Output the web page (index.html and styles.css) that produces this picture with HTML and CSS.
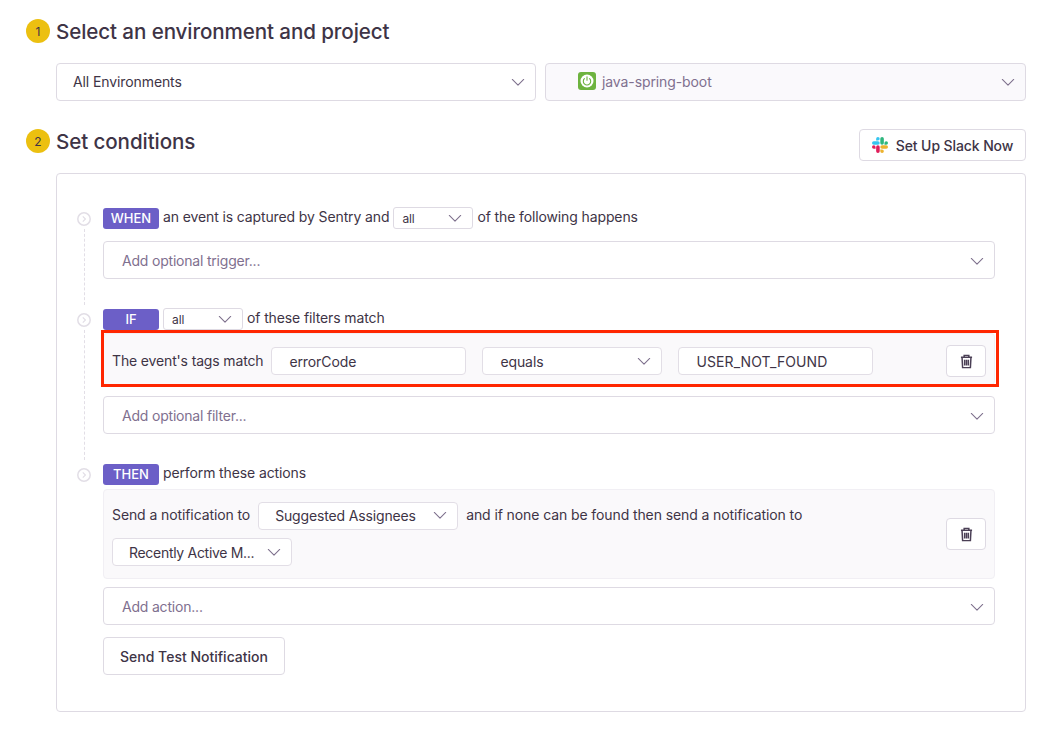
FILE: index.html
```html
<!DOCTYPE html>
<html>
<head>
    <title>Alert Rule</title>
    <link rel="stylesheet" href="styles.css">
</head>
<body>
    <svg class="defs" width="0" height="0">
        <symbol id="chevron" viewBox="0 0 16 10"><path d="M1.5 1.5 8 8l6.5-6.5" fill="none" stroke="currentColor" stroke-width="1.2" stroke-linecap="round" stroke-linejoin="round"/></symbol>
        <symbol id="step" viewBox="0 0 14 14"><circle cx="7" cy="7" r="6.2" fill="none" stroke="currentColor" stroke-width="1.5"/><path d="M5.8 4.4 8.4 7l-2.6 2.6" fill="none" stroke="currentColor" stroke-width="1.2"/></symbol>
        <symbol id="trash" viewBox="0 0 14 16"><path d="M1 3.5h12M4.5 3.2V1.4h5v1.8M2.2 3.6l.6 11h8.4l.6-11M5 6v6.4M7 6v6.4M9 6v6.4" fill="none" stroke="currentColor" stroke-width="1.6"/></symbol>
    </svg>

    <div class="step-header">
        <span class="step-num">1</span>
        <h2>Select an environment and project</h2>
    </div>
    <div class="env-row">
        <div class="select">
            <span>All Environments</span>
            <svg class="chev"><use href="#chevron"/></svg>
        </div>
        <div class="select select-disabled">
            <span class="project">
                <svg class="spring" viewBox="0 0 18 18">
                    <rect width="18" height="18" rx="3" fill="#6db33f"/>
                    <circle cx="9" cy="9" r="6.5" fill="#fff"/>
                    <path d="M9 4.8v3.4M6.4 6.6a3.7 3.7 0 1 0 5.2 0" fill="none" stroke="#6db33f" stroke-width="1.1" stroke-linecap="round"/>
                </svg>
                java-spring-boot
            </span>
            <svg class="chev"><use href="#chevron"/></svg>
        </div>
    </div>

    <div class="step-header step-two">
        <span class="step-num">2</span>
        <h2>Set conditions</h2>
        <a class="btn btn-slack">
            <svg class="slack" viewBox="0 0 54 54">
                <path fill="#36c5f0" d="M20 14a6 6 0 0 1 0 12H6a6 6 0 0 1 0-12zM14 6a6 6 0 1 1 6 6h-6z"/>
                <path fill="#2eb67d" d="M28 6a6 6 0 0 1 12 0v14a6 6 0 0 1-12 0zM42 20a6 6 0 1 1 6 6h-6z"/>
                <path fill="#ecb22e" d="M34 28h14a6 6 0 0 1 0 12H34a6 6 0 0 1 0-12zM28 42h6a6 6 0 1 1-6 6z"/>
                <path fill="#e01e5a" d="M14 34a6 6 0 0 1 12 0v14a6 6 0 0 1-12 0zM0 34a6 6 0 0 1 6-6 6 6 0 0 1 6 6v6H6a6 6 0 0 1-6-6z"/>
            </svg>
            Set Up Slack Now
        </a>
    </div>

    <div class="panel">
        <div class="block block-when">
            <div class="gutter"><svg class="step-icon"><use href="#step"/></svg><i class="dash"></i></div>
            <div class="block-body">
                <div class="cond-head">
                    <span class="tag">WHEN</span>
                    <span class="cond-text">an event is captured by Sentry and</span>
                    <div class="select select-mini"><span>all</span><svg class="chev"><use href="#chevron"/></svg></div>
                    <span class="cond-text">of the following happens</span>
                </div>
                <div class="select select-add">
                    <span class="placeholder">Add optional trigger...</span>
                    <svg class="chev"><use href="#chevron"/></svg>
                </div>
            </div>
        </div>

        <div class="block block-if">
            <div class="gutter"><svg class="step-icon"><use href="#step"/></svg><i class="dash"></i></div>
            <div class="block-body">
                <div class="cond-head cond-head-flush">
                    <span class="tag">IF</span>
                    <div class="select select-mini"><span>all</span><svg class="chev"><use href="#chevron"/></svg></div>
                    <span class="cond-text">of these filters match</span>
                </div>
                <div class="rule rule-filter">
                    <div class="rule-fields">
                        <span class="rule-label">The event's tags match</span>
                        <div class="field field-key">errorCode</div>
                        <div class="select select-small select-match"><span>equals</span><svg class="chev"><use href="#chevron"/></svg></div>
                        <div class="field field-value">USER_NOT_FOUND</div>
                    </div>
                    <a class="btn btn-trash"><svg class="trash"><use href="#trash"/></svg></a>
                    <div class="highlight"></div>
                </div>
                <div class="select select-add">
                    <span class="placeholder">Add optional filter...</span>
                    <svg class="chev"><use href="#chevron"/></svg>
                </div>
            </div>
        </div>

        <div class="block block-then">
            <div class="gutter"><svg class="step-icon"><use href="#step"/></svg></div>
            <div class="block-body">
                <div class="cond-head">
                    <span class="tag">THEN</span>
                    <span class="cond-text">perform these actions</span>
                </div>
                <div class="rule rule-action">
                    <div class="rule-fields rule-wrap">
                        <span class="cond-text">Send a notification to</span>
                        <div class="select select-small select-assignee"><span>Suggested Assignees</span><svg class="chev"><use href="#chevron"/></svg></div>
                        <span class="cond-text">and if none can be found then send a notification to</span>
                        <div class="select select-small select-fallback"><span>Recently Active M...</span><svg class="chev"><use href="#chevron"/></svg></div>
                    </div>
                    <a class="btn btn-trash"><svg class="trash"><use href="#trash"/></svg></a>
                </div>
                <div class="select select-add">
                    <span class="placeholder">Add action...</span>
                    <svg class="chev"><use href="#chevron"/></svg>
                </div>
                <a class="btn btn-test">Send Test Notification</a>
            </div>
        </div>
    </div>
</body>
</html>
```

FILE: styles.css
```css
body {
    font-family: Inter, "Noto Sans", sans-serif;
    font-size: 14px;
    color: #3e3446;
    background: #fff;
    margin: 0;
    padding: 19px 28px 0 26px;
    overflow: hidden;
}

.defs {
    position: absolute;
}

.step-header {
    display: flex;
    align-items: center;
    gap: 6px;
    height: 24px;
}

.step-header h2 {
    margin: 0;
    font-size: 20.6px;
    font-weight: 500;
    letter-spacing: -0.1px;
}

.step-num {
    width: 24px;
    height: 24px;
    border-radius: 50%;
    background: #ecc010;
    font-size: 12px;
    display: flex;
    align-items: center;
    justify-content: center;
}

.step-two {
    margin-top: 28px;
}

.env-row {
    display: grid;
    grid-template-columns: 480px 1fr;
    gap: 9px;
    margin: 20px 0 0 30px;
}

.env-row .select,
.select-add {
    padding-bottom: 2px;
}

.env-row .chev,
.select-add .chev {
    margin-top: 2px;
}

.select {
    box-sizing: border-box;
    height: 38px;
    display: flex;
    align-items: center;
    justify-content: space-between;
    padding: 0 10px 0 16px;
    border: 1px solid #dedae3;
    border-radius: 4px;
    background: #fff;
    letter-spacing: -0.1px;
}

.chev {
    width: 14px;
    height: 9px;
    color: #7d6f8c;
    flex: none;
}

.env-row .select-disabled {
    background: #faf9fc;
    color: #80708f;
    padding-left: 32px;
}

.project {
    display: flex;
    align-items: center;
    gap: 6px;
}

.spring {
    width: 18px;
    height: 18px;
}

.btn {
    box-sizing: border-box;
    display: inline-flex;
    align-items: center;
    justify-content: center;
    border: 1px solid #dedae3;
    border-radius: 4px;
    background: #fff;
    font-weight: 500;
    cursor: pointer;
}

.btn-slack {
    margin-left: auto;
    margin-top: 8px;
    width: 167px;
    height: 32px;
    gap: 8px;
    font-size: 14px;
    letter-spacing: -0.1px;
}

.slack {
    width: 16px;
    height: 16px;
}

.panel {
    box-sizing: border-box;
    height: 539px;
    margin: 20px 0 0 30px;
    padding: 33px 30px 0 20px;
    border: 1px solid #dedae3;
    border-radius: 4px;
}

.block {
    display: flex;
}

.block-if {
    margin-top: 29px;
}

.block-then {
    margin-top: 29px;
}

.gutter {
    width: 26px;
    flex: none;
    display: flex;
    flex-direction: column;
    padding-top: 5px;
    box-sizing: border-box;
}

.step-icon {
    width: 14px;
    height: 14px;
    color: #e2dee6;
    flex: none;
}

.dash {
    flex: 1;
    width: 0;
    margin: 3px 0 -26px 7px;
    border-left: 1px dashed #e2dee6;
}

.block-body {
    flex: 1;
    min-width: 0;
}

.cond-head {
    display: flex;
    align-items: center;
    gap: 4px;
    height: 22px;
    margin-bottom: 12px;
    letter-spacing: -0.12px;
}

.cond-text {
    margin-bottom: 3px;
}

.block-then .cond-head {
    margin-bottom: 4px;
}

.cond-head-flush {
    margin-bottom: 3px;
}

.tag {
    width: 56px;
    height: 21px;
    border-radius: 3px;
    background: #6c5fc7;
    color: #fff;
    font-weight: 500;
    font-size: 13px;
    letter-spacing: 0;
    display: flex;
    align-items: center;
    justify-content: center;
}

.select-mini {
    width: 80px;
    height: 22px;
    font-size: 12px;
    padding: 0 10px 0 8px;
    border-radius: 3px;
}

.select-add {
    padding-left: 18px;
}

.select-add .placeholder {
    color: #80708f;
    letter-spacing: -0.2px;
}

.rule {
    box-sizing: border-box;
    position: relative;
    display: flex;
    align-items: flex-start;
    justify-content: space-between;
    padding: 12px 8px;
    background: #faf9fb;
    border: 1px solid #f1eff4;
    border-radius: 4px;
    margin-bottom: 8px;
    letter-spacing: -0.1px;
}

.rule-filter {
    height: 52px;
    margin-bottom: 11px;
    padding-top: 15px;
    align-items: center;
    padding-bottom: 11px;
}

.rule-label {
    letter-spacing: -0.15px;
    margin-bottom: 2px;
}

.rule-action {
    height: 90px;
    align-items: center;
}

.rule-fields {
    display: flex;
    align-items: center;
    gap: 8px;
}

.rule-wrap {
    flex-wrap: wrap;
    row-gap: 8px;
    width: 780px;
}

.field,
.select-small {
    box-sizing: border-box;
    height: 28px;
    background: #fff;
    border: 1px solid #e2dee6;
    border-radius: 4px;
}

.field {
    display: flex;
    align-items: center;
    padding-left: 17px;
}

.select-small {
    padding: 0 10px 0 17px;
}

.field-key {
    width: 195px;
}

.field-value {
    width: 195px;
    margin-left: 8px;
    letter-spacing: 0.1px;
}

.select-match {
    width: 180px;
    margin-left: 8px;
}

.select-assignee {
    width: 200px;
    padding-left: 16px;
    padding-bottom: 1px;
    letter-spacing: -0.15px;
}

.select-fallback {
    width: 180px;
    padding-left: 16px;
    letter-spacing: -0.3px;
}

.btn-trash {
    width: 40px;
    height: 32px;
    flex: none;
}

.trash {
    width: 13px;
    height: 15px;
    color: #4a3f55;
}

/* annotation drawn over the filter row */
.highlight {
    position: absolute;
    left: -3px;
    top: -4px;
    right: -5px;
    bottom: -3px;
    border: 3px solid #ff2600;
    pointer-events: none;
}

.btn-test {
    width: 182px;
    height: 38px;
    margin-top: 12px;
}
```
